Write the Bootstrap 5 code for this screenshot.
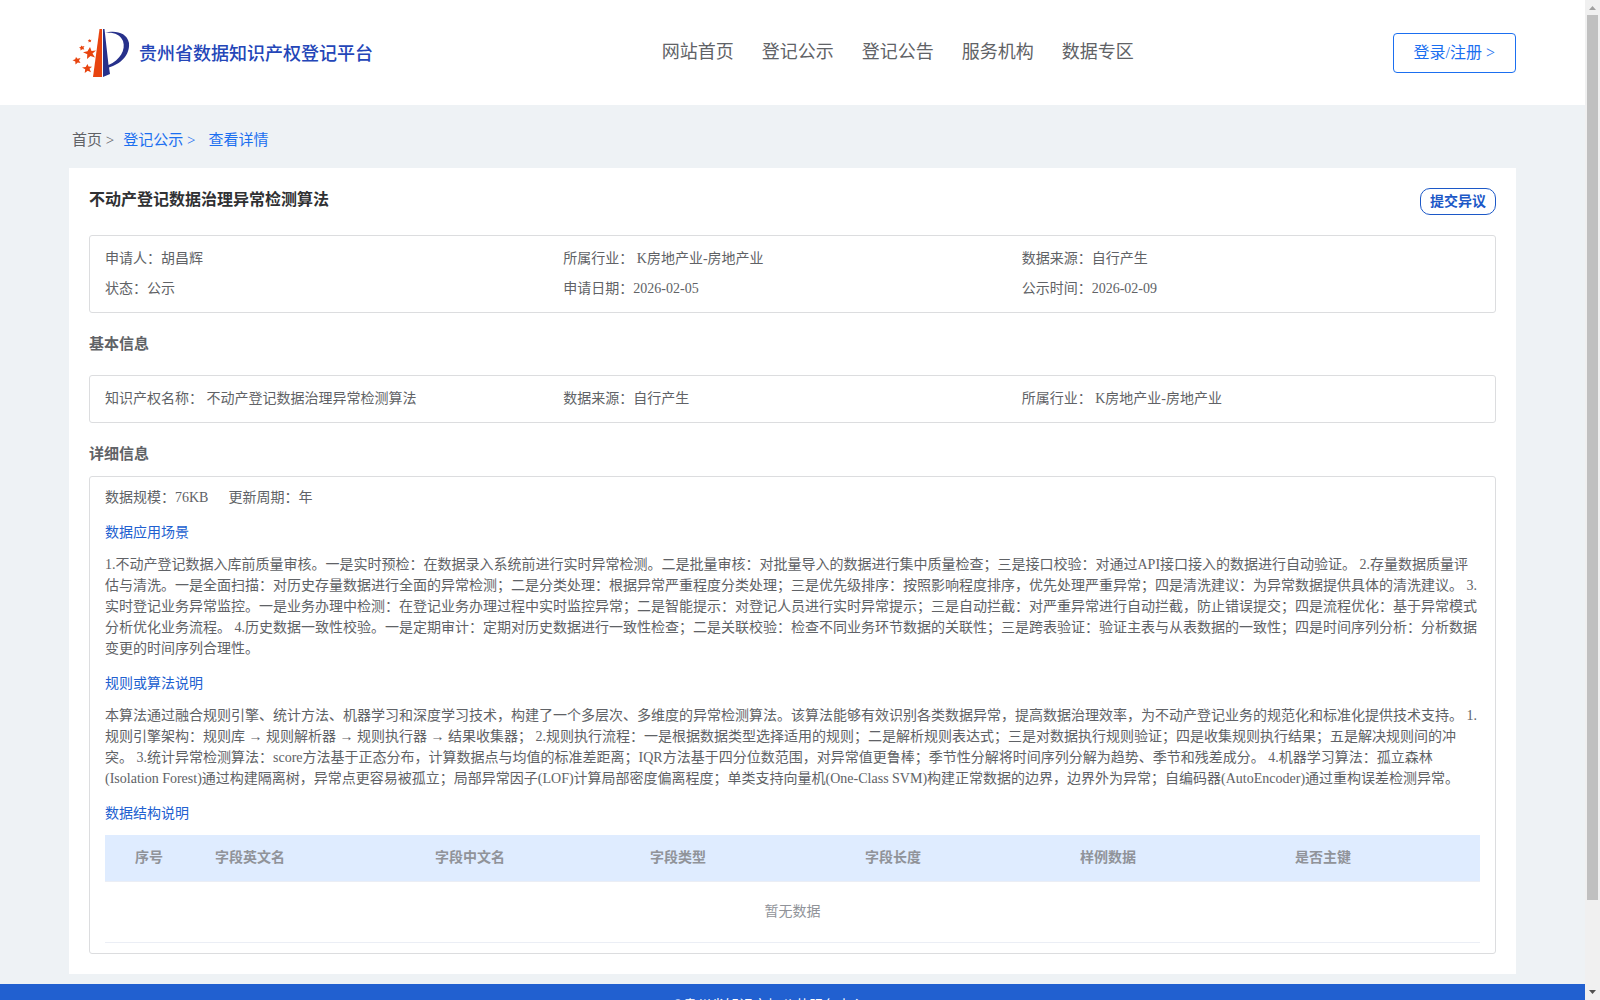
<!DOCTYPE html>
<html lang="zh-CN">
<head>
<meta charset="utf-8">
<meta name="viewport" content="width=device-width, initial-scale=1">
<title>贵州省数据知识产权登记平台</title>
<link href="https://cdn.jsdelivr.net/npm/bootstrap@5.3.0/dist/css/bootstrap.min.css" rel="stylesheet">
<style>
body{font-family:"Liberation Serif","Noto Sans CJK SC",serif;font-size:14px;line-height:21px;color:#606266;background:#eef2f5}
a{text-decoration:none}
.gutter{padding-left:69px;padding-right:69px}
.site-head{height:105px}
.brand-link{padding-left:3px;gap:6px}
.brand-name{font-size:18px;color:#2446b8;font-weight:500;padding-top:4px}
.site-nav{gap:28px;padding-left:30px;padding-bottom:2px}
.site-nav a{font-size:18px;line-height:24px;color:#606266}
.btn-login{font-size:16px;line-height:24px;height:40px;padding:0 20px;color:#1b6ff0;border:1px solid #1b6ff0;border-radius:4px;background:#fff}
.crumbs{height:63px;padding-top:8px;padding-left:3px;gap:9px;font-size:15px;color:#606266}
.crumbs a{color:#1b6ff0}
.crumbs a.home{color:#606266}
.sheet{padding:20px 20px;background:#fff}
.sheet h1{font-size:16px;line-height:24px;font-weight:700;color:#303133}
.btn-object{font-size:14px;line-height:21px;padding:2px 9px;font-weight:700;color:#1c58c7;border:1px solid #1c58c7;border-radius:10px;background:#fff}
.sheet h2{font-size:15px;line-height:22px;font-weight:700;color:#606266}
.panel{border:1px solid #dcdddf;border-radius:3px;padding:8px 15px}
.panel .line-item{line-height:30px}
.sheet h2.detail-title{margin:20px 0 11px}
.detail{padding-top:10px;padding-bottom:10px}
.detail .facts{margin-bottom:15px}
.detail h3{font-size:14px;line-height:20px;color:#2160d0;font-weight:400;margin:0 0 11px}
.detail p{margin:0 0 15px}
.fields{table-layout:fixed;width:100%}
.fields th{height:47px;padding:0 10px 3px;background:#dfecff;color:#909399;font-weight:700;box-shadow:inset 0 -1px #ebeef5}
.fields th:first-child{padding-left:30px}
.fields td{height:60px;padding:0;text-align:center;color:#909399;border-bottom:1px solid #ebeef5}
.fields .c-no{width:100px}.fields .c-en{width:220px}.fields .c-std{width:215px}
.site-foot{background:#2160d0;color:#fff;margin-top:10px;padding:11px 0}
.scroll-rail{width:15px;background:#f0f0f0;padding:0 2px}
.scroll-thumb{background:#c0c0c0;width:11px;height:885px}
</style>
<script src="https://cdn.jsdelivr.net/npm/bootstrap@5.3.0/dist/js/bootstrap.bundle.min.js"></script>
</head>
<body class="d-flex vh-100 overflow-hidden">
<div class="flex-grow-1 overflow-hidden">
  <header class="site-head gutter bg-white d-flex align-items-center justify-content-between">
    <a class="brand-link d-flex align-items-center" href="#">
      <svg width="61" height="52" viewBox="0 0 61 52" aria-hidden="true">
        <path d="M27.500 2h2.500v48h-9z" fill="#e8440f"/>
        <path d="M31 2h1.500l4 36C48 33 54 23 51 14C48 7 41 5 33 6C42 3 55 5 57 16C58 29 48 37 37 40.500L38 47L31 50z" fill="#27318b"/>
        <g fill="#e8440f">
          <path d="M18 20l1.500 4 4.500-.5-3.500 3 2.500 4-4.500-1.500-3.500 3 .3-4.700-4.300-2 4.500-1z"/>
          <path d="M15.500 37l1 2.500 3.500.2-2.500 2 1.500 3.500-3.300-1.500-3 2.300.5-3.700-3.200-1.800 3.700-.5z"/>
          <path d="M4 30l1.500 1.800 3-.8-1.500 2.500 1.500 2.500-2.700-.5-2.300 2-.2-3-2.800-1.200 2.700-1z"/>
          <path d="M9 18.500l1.500 1 2-.5-1 1.800.8 1.700-2-.3-1.800 1.300v-2l-1.500-1 1.800-.5z"/>
          <path d="M17 12l1 1 1.500-.2-.8 1.200.3 1.200-1.300-.4-1.200.6.200-1.300-1-.9 1.200-.2z"/>
        </g>
      </svg>
      <span class="brand-name">贵州省数据知识产权登记平台</span>
    </a>
    <nav class="site-nav d-flex">
      <a href="#">网站首页</a><a href="#">登记公示</a><a href="#">登记公告</a><a href="#">服务机构</a><a href="#">数据专区</a>
    </nav>
    <button type="button" class="btn-login">登录/注册 &gt;</button>
  </header>
  <main class="gutter">
    <nav class="crumbs d-flex align-items-center" aria-label="面包屑">
      <a class="home" href="#">首页 &gt;</a><a href="#" class="me-1">登记公示 &gt;</a><a href="#">查看详情</a>
    </nav>
    <div class="sheet">
      <div class="d-flex justify-content-between align-items-start mb-3 pb-1">
        <h1 class="m-0">不动产登记数据治理异常检测算法</h1>
        <button type="button" class="btn-object">提交异议</button>
      </div>
      <section class="panel">
        <div class="row g-0">
          <div class="col-4 line-item">申请人：胡昌辉</div>
          <div class="col-4 line-item">所属行业： K房地产业-房地产业</div>
          <div class="col-4 line-item">数据来源：自行产生</div>
          <div class="col-4 line-item">状态：公示</div>
          <div class="col-4 line-item">申请日期：2026-02-05</div>
          <div class="col-4 line-item">公示时间：2026-02-09</div>
        </div>
      </section>
      <h2 class="mb-3 pb-1 mt-3 pt-1">基本信息</h2>
      <section class="panel">
        <div class="row g-0">
          <div class="col-4 line-item">知识产权名称： 不动产登记数据治理异常检测算法</div>
          <div class="col-4 line-item">数据来源：自行产生</div>
          <div class="col-4 line-item">所属行业： K房地产业-房地产业</div>
        </div>
      </section>
      <h2 class="detail-title">详细信息</h2>
      <section class="panel detail">
        <div class="facts d-flex"><span class="me-3 pe-1">数据规模：76KB</span><span>更新周期：年</span></div>
        <h3>数据应用场景</h3>
        <p>1.不动产登记数据入库前质量审核。一是实时预检：在数据录入系统前进行实时异常检测。二是批量审核：对批量导入的数据进行集中质量检查；三是接口校验：对通过API接口接入的数据进行自动验证。 2.存量数据质量评估与清洗。一是全面扫描：对历史存量数据进行全面的异常检测；二是分类处理：根据异常严重程度分类处理；三是优先级排序：按照影响程度排序，优先处理严重异常；四是清洗建议：为异常数据提供具体的清洗建议。 3.实时登记业务异常监控。一是业务办理中检测：在登记业务办理过程中实时监控异常；二是智能提示：对登记人员进行实时异常提示；三是自动拦截：对严重异常进行自动拦截，防止错误提交；四是流程优化：基于异常模式分析优化业务流程。 4.历史数据一致性校验。一是定期审计：定期对历史数据进行一致性检查；二是关联校验：检查不同业务环节数据的关联性；三是跨表验证：验证主表与从表数据的一致性；四是时间序列分析：分析数据变更的时间序列合理性。</p>
        <h3>规则或算法说明</h3>
        <p>本算法通过融合规则引擎、统计方法、机器学习和深度学习技术，构建了一个多层次、多维度的异常检测算法。该算法能够有效识别各类数据异常，提高数据治理效率，为不动产登记业务的规范化和标准化提供技术支持。 1.规则引擎架构：规则库 → 规则解析器 → 规则执行器 → 结果收集器； 2.规则执行流程：一是根据数据类型选择适用的规则；二是解析规则表达式；三是对数据执行规则验证；四是收集规则执行结果；五是解决规则间的冲突。 3.统计异常检测算法：score方法基于正态分布，计算数据点与均值的标准差距离；IQR方法基于四分位数范围，对异常值更鲁棒；季节性分解将时间序列分解为趋势、季节和残差成分。 4.机器学习算法：孤立森林(Isolation Forest)通过构建隔离树，异常点更容易被孤立；局部异常因子(LOF)计算局部密度偏离程度；单类支持向量机(One-Class SVM)构建正常数据的边界，边界外为异常；自编码器(AutoEncoder)通过重构误差检测异常。</p>
        <h3>数据结构说明</h3>
        <table class="fields">
          <colgroup><col class="c-no"><col class="c-en"><col class="c-std"><col class="c-std"><col class="c-std"><col class="c-std"><col></colgroup>
          <thead><tr><th>序号</th><th>字段英文名</th><th>字段中文名</th><th>字段类型</th><th>字段长度</th><th>样例数据</th><th>是否主键</th></tr></thead>
          <tbody><tr><td colspan="7">暂无数据</td></tr></tbody>
        </table>
      </section>
    </div>
  </main>
  <footer class="site-foot text-center">Copyright ©贵州省知识产权公共服务中心 All rights reserved</footer>
</div>
<div class="scroll-rail d-flex flex-column align-items-center justify-content-between flex-shrink-0" aria-hidden="true">
  <svg width="11" height="15" viewBox="0 0 11 15"><path d="M2 10l3.500-4L9 10z" fill="#a0a0a0"/></svg>
  <div class="scroll-thumb"></div>
  <svg class="mt-auto" width="11" height="15" viewBox="0 0 11 15"><path d="M2 5l3.500 4L9 5z" fill="#505050"/></svg>
</div>
</body>
</html>
